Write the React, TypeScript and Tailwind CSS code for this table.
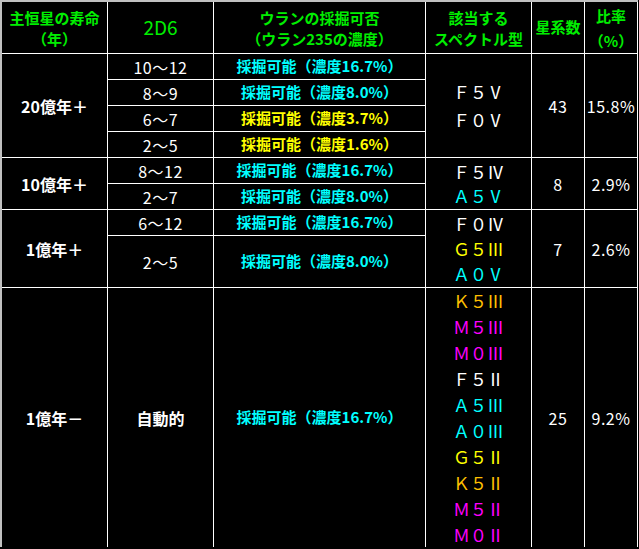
const CYAN = 'text-[#00ffff]';
const YELLOW = 'text-[#ffff00]';
const ORANGE = 'text-[#ffc000]';
const MAGENTA = 'text-[#ff00ff]';
const WHITE = 'text-white';

const cell = 'flex flex-col items-center justify-center bg-black text-center';
const head = `${cell} font-bold text-[#00ee00]`;
const num = `${cell} text-[16px] tracking-[0.5px]`;

type Line = { text: string; color: string };

const LONG_LIST: Line[] = [
  { text: 'Ｋ５Ⅲ', color: ORANGE },
  { text: 'Ｍ５Ⅲ', color: MAGENTA },
  { text: 'Ｍ０Ⅲ', color: MAGENTA },
  { text: 'Ｆ５Ⅱ', color: WHITE },
  { text: 'Ａ５Ⅲ', color: CYAN },
  { text: 'Ａ０Ⅲ', color: CYAN },
  { text: 'Ｇ５Ⅱ', color: YELLOW },
  { text: 'Ｋ５Ⅱ', color: ORANGE },
  { text: 'Ｍ５Ⅱ', color: MAGENTA },
  { text: 'Ｍ０Ⅱ', color: MAGENTA },
];

function Mining({ value, color }: { value: string; color: string }) {
  return <div className={`${cell} font-bold ${color}`}>採掘可能（濃度{value}%）</div>;
}

export default function App() {
  return (
    <div className="min-h-screen bg-black font-['Noto_Sans_CJK_JP','DejaVu_Sans',sans-serif] text-[15px] text-white">
      <div className="inline-block border-l-2 border-t-2 border-[#c0c0c0] bg-white pr-px">
        <div className="grid grid-cols-[105px_105px_211px_105px_52px_52px] grid-rows-[51px_25px_25px_25px_25px_25px_25px_25px_51px_259px] gap-px">
          {/* header */}
          <div className={`${head} text-[15px] leading-[21px]`}>
            <span>主恒星の寿命</span>
            <span>（年）</span>
          </div>
          <div className={`${head} text-[19px] font-normal`}>2D6</div>
          <div className={`${head} text-[15px] leading-[21px]`}>
            <span>ウランの採掘可否</span>
            <span>（ウラン235の濃度）</span>
          </div>
          <div className={`${head} text-[15px] leading-[21px]`}>
            <span>該当する</span>
            <span>スペクトル型</span>
          </div>
          <div className={`${head} text-[15px]`}>星系数</div>
          <div className={`${head} text-[15px] leading-[25px]`}>
            <span>比率</span>
            <span>（%）</span>
          </div>

          {/* 20億年+ */}
          <div className={`${cell} row-span-4 text-[16px] font-bold`}>20億年＋</div>
          <div className={num}>10～12</div>
          <Mining value="16.7" color={CYAN} />
          <div className={`${cell} row-span-4 text-[17px] leading-[28px]`}>
            <span>Ｆ５Ⅴ</span>
            <span>Ｆ０Ⅴ</span>
          </div>
          <div className={`${num} row-span-4`}>43</div>
          <div className={`${num} row-span-4`}>15.8%</div>
          <div className={num}>8～9</div>
          <Mining value="8.0" color={CYAN} />
          <div className={num}>6～7</div>
          <Mining value="3.7" color={YELLOW} />
          <div className={num}>2～5</div>
          <Mining value="1.6" color={YELLOW} />

          {/* 10億年+ */}
          <div className={`${cell} row-span-2 text-[16px] font-bold`}>10億年＋</div>
          <div className={num}>8～12</div>
          <Mining value="16.7" color={CYAN} />
          <div className={`${cell} row-span-2 text-[17px] leading-[24px]`}>
            <span className={WHITE}>Ｆ５Ⅳ</span>
            <span className={CYAN}>Ａ５Ⅴ</span>
          </div>
          <div className={`${num} row-span-2`}>8</div>
          <div className={`${num} row-span-2`}>2.9%</div>
          <div className={num}>2～7</div>
          <Mining value="8.0" color={CYAN} />

          {/* 1億年+ */}
          <div className={`${cell} row-span-2 text-[16px] font-bold`}>1億年＋</div>
          <div className={num}>6～12</div>
          <Mining value="16.7" color={CYAN} />
          <div className={`${cell} row-span-2 text-[17px] leading-[25px]`}>
            <span className={WHITE}>Ｆ０Ⅳ</span>
            <span className={YELLOW}>Ｇ５Ⅲ</span>
            <span className={CYAN}>Ａ０Ⅴ</span>
          </div>
          <div className={`${num} row-span-2`}>7</div>
          <div className={`${num} row-span-2`}>2.6%</div>
          <div className={num}>2～5</div>
          <Mining value="8.0" color={CYAN} />

          {/* 1億年- */}
          <div className={`${cell} text-[16px] font-bold`}>1億年－</div>
          <div className={`${cell} text-[16px] font-bold`}>自動的</div>
          <Mining value="16.7" color={CYAN} />
          <div className={`${cell} text-[17px] leading-[26px]`}>
            {LONG_LIST.map((l, i) => (
              <span key={i} className={l.color}>
                {l.text}
              </span>
            ))}
          </div>
          <div className={num}>25</div>
          <div className={num}>9.2%</div>
        </div>
      </div>
    </div>
  );
}
